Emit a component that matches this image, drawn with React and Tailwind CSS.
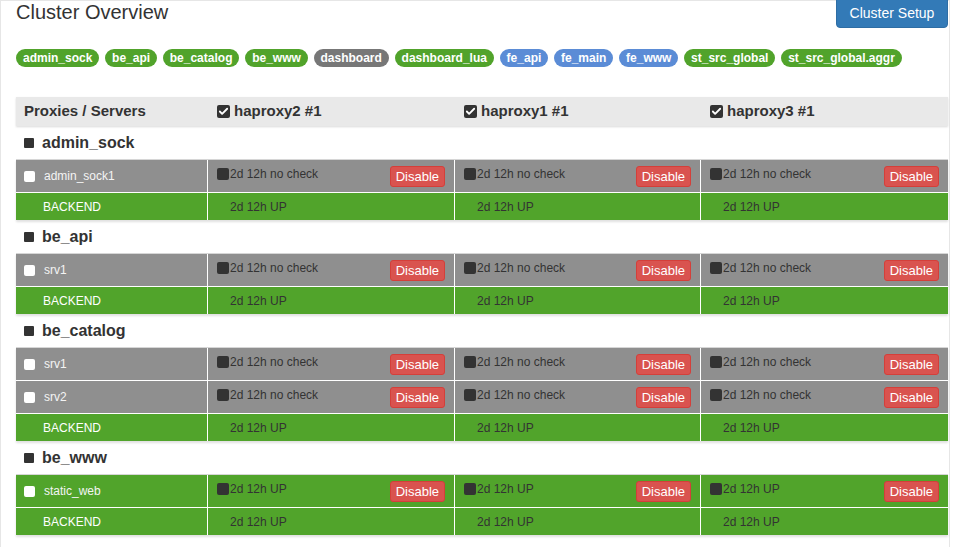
import { Check } from 'lucide-react';

const tags = [
  { name: 'admin_sock', color: 'bg-[#51a32b]' },
  { name: 'be_api', color: 'bg-[#51a32b]' },
  { name: 'be_catalog', color: 'bg-[#51a32b]' },
  { name: 'be_www', color: 'bg-[#51a32b]' },
  { name: 'dashboard', color: 'bg-[#777777]' },
  { name: 'dashboard_lua', color: 'bg-[#51a32b]' },
  { name: 'fe_api', color: 'bg-[#5b8cd6]' },
  { name: 'fe_main', color: 'bg-[#5b8cd6]' },
  { name: 'fe_www', color: 'bg-[#5b8cd6]' },
  { name: 'st_src_global', color: 'bg-[#51a32b]' },
  { name: 'st_src_global.aggr', color: 'bg-[#51a32b]' },
];

const nodes = ['haproxy2 #1', 'haproxy1 #1', 'haproxy3 #1'];

const proxies = [
  { name: 'admin_sock', servers: [{ name: 'admin_sock1', up: false }] },
  { name: 'be_api', servers: [{ name: 'srv1', up: false }] },
  { name: 'be_catalog', servers: [{ name: 'srv1', up: false }, { name: 'srv2', up: false }] },
  { name: 'be_www', servers: [{ name: 'static_web', up: true }] },
];

const cols = 'grid grid-cols-[192px_247px_246px_1fr]';

function ServerRow({ server }) {
  const bg = server.up ? 'bg-[#51a42b]' : 'bg-[#8f8f8f]';
  return (
    <div className={`${cols} ${bg} h-[33px] border-b border-white`}>
      <div className="flex items-center pl-[8px] border-r border-white">
        <span className="w-[11px] h-[11px] bg-white rounded-[2px]" />
        <span className="ml-[9px] text-[12px] text-[#f4f4f4]">{server.name}</span>
      </div>
      {nodes.map((n, i) => (
        <div key={n} className={`flex items-start justify-between pl-[9px] pr-[9px] ${i < 2 ? 'border-r border-white' : ''}`}>
          <div className="flex items-center mt-[7px]">
            <span className="w-[12px] h-[12px] bg-[#333] rounded-[2px]" />
            <span className="ml-[1px] text-[12px] text-[#333] leading-[14px]">
              {server.up ? '2d 12h UP' : '2d 12h no check'}
            </span>
          </div>
          <button className="mt-[6px] h-[21px] px-[5px] bg-[#d9534f] border border-[#d43f3a] rounded-[3px] text-white text-[13px] leading-none">
            Disable
          </button>
        </div>
      ))}
    </div>
  );
}

function BackendRow() {
  return (
    <div className={`${cols} bg-[#51a42b] h-[27px]`}>
      <div className="flex items-center pl-[27px] border-r border-white text-[12px] text-white">BACKEND</div>
      {nodes.map((n, i) => (
        <div key={n} className={`flex items-center pl-[22px] text-[12px] text-[#333] ${i < 2 ? 'border-r border-white' : ''}`}>
          2d 12h UP
        </div>
      ))}
    </div>
  );
}

function ProxySection({ proxy }) {
  return (
    <div>
      <div className="h-[33px] flex items-center pl-[8px]">
        <span className="w-[10px] h-[10px] bg-[#333] rounded-[1px]" />
        <span className="ml-[8px] text-[16px] font-bold text-[#333]">{proxy.name}</span>
      </div>
      <div className="border-t border-[#d6d6d6] shadow-[0_2px_2px_rgba(0,0,0,0.12)]">
        {proxy.servers.map((s, i) => (
          <ServerRow key={i} server={s} />
        ))}
        <BackendRow />
      </div>
    </div>
  );
}

export default function App() {
  return (
    <div className="w-[960px] h-[547px] overflow-hidden bg-white" style={{ fontFamily: '"Liberation Sans", Arial, sans-serif' }}>
      <div className="w-[950px] h-[560px] border-t border-l border-r border-[#e6e6e6]">
        <div className="flex justify-between items-start pl-[15px] pr-[1px]">
          <h1 className="text-[20px] leading-[22px] text-[#333] mt-[0px]">Cluster Overview</h1>
          <button className="-mt-[8px] h-[35px] w-[112px] pt-[6px] bg-[#337ab7] border border-[#2e6da4] rounded-[4px] text-white text-[14px]">
            Cluster Setup
          </button>
        </div>

        <div className="flex flex-wrap gap-[5.7px] pl-[15px] mt-[21px]">
          {tags.map((t) => (
            <span key={t.name} className={`${t.color} h-[18px] px-[7px] rounded-full text-white text-[12px] font-bold flex items-center`}>
              {t.name}
            </span>
          ))}
        </div>

        <div className="ml-[15px] mr-[1px] mt-[30px]">
          <div className={`${cols} h-[29px] bg-[#e9e9e9] shadow-[0_1px_2px_rgba(0,0,0,0.15)]`}>
            <div className="flex items-center pl-[8px] text-[15px] font-bold text-[#333]">Proxies / Servers</div>
            {nodes.map((n) => (
              <div key={n} className="flex items-center pl-[9px]">
                <span className="w-[13px] h-[13px] bg-[#333] rounded-[2px] flex items-center justify-center">
                  <Check size={11} strokeWidth={4} className="text-white" />
                </span>
                <span className="ml-[4px] text-[15px] font-bold text-[#333]">{n}</span>
              </div>
            ))}
          </div>
          {proxies.map((p) => (
            <ProxySection key={p.name} proxy={p} />
          ))}
        </div>
      </div>
    </div>
  );
}
